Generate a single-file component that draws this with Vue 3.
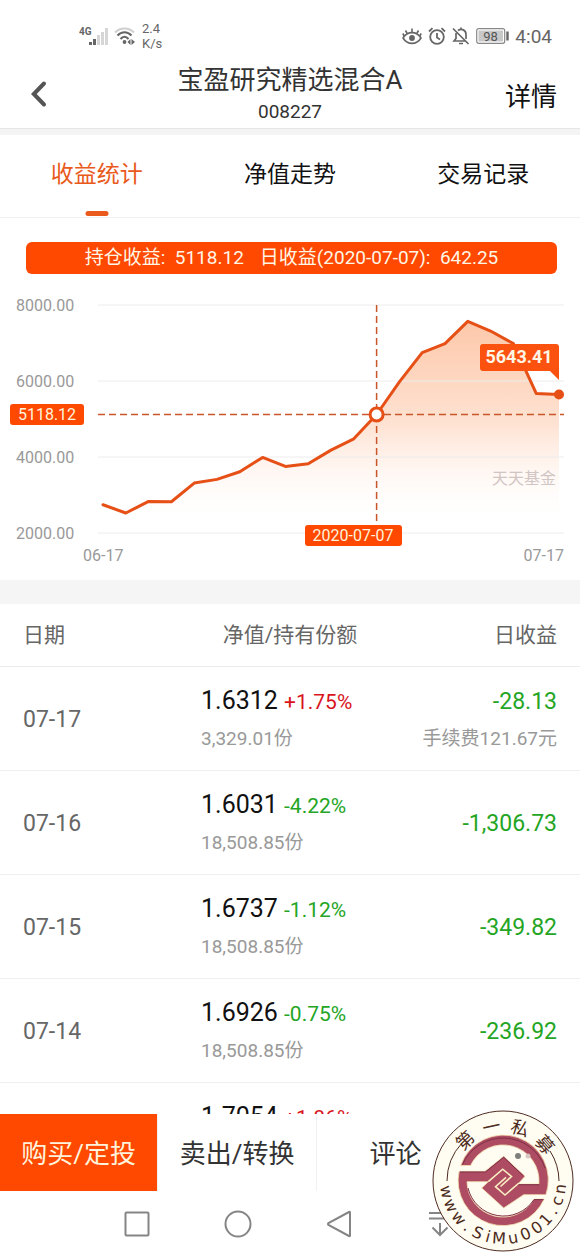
<template>
  <div class="fund-page">

    <!-- ================= 状态栏 ================= -->
    <div class="status-bar">
      <div class="status-left">
        <svg class="signal" viewBox="0 0 29 20" width="29" height="20">
          <text x="0" y="9" class="net-type">4G</text>
          <g stroke-width="3">
            <path d="M11.5 19v-3M15.5 19v-6" stroke="#666" />
            <path d="M19.5 19v-10M23.5 19v-13M27.5 19v-17" stroke="#d6d6d6" />
          </g>
        </svg>
        <svg viewBox="0 0 22 20" width="22" height="20" fill="none" stroke-width="2">
          <path d="M1 6.500C6 1 15 1 20 6.500" stroke="#d0d0d0" />
          <path d="M3.500 9.500C7.500 5 13.500 5 17.500 9.500M6.500 13C9 10 12 10 14.500 13" stroke="#666" />
          <circle cx="10.500" cy="16" r="1.900" fill="#666" />
          <path d="M16.500 13v6l-3-3zM17.500 13v6l3.500-3z" fill="#666" />
        </svg>
        <div class="speed">2.4<br />K/s</div>
      </div>
      <div class="status-right">
        <svg viewBox="0 0 20 18" width="20" height="18" fill="none" stroke="#666" stroke-width="1.600">
          <path d="M1 11C5.500 3.800 14.500 3.800 19 11 14.500 18.200 5.500 18.200 1 11z" />
          <circle cx="10" cy="11" r="2.900" fill="#666" stroke="none" />
          <path d="M10 5.500V1.500M5.200 6.500 3.500 3.500M14.800 6.500 16.500 3.500M2.200 9 0.800 6.500M17.800 9 19.200 6.500" />
        </svg>
        <svg viewBox="0 0 18 18" width="18" height="18" fill="none" stroke="#666" stroke-width="1.800">
          <circle cx="9" cy="10" r="6.800" />
          <path d="M9 6v4.500l3 2M1 4.500 4.500 1.200M17 4.500 13.500 1.200" />
        </svg>
        <svg viewBox="0 0 18 18" width="18" height="18" fill="none" stroke="#666" stroke-width="1.700">
          <path d="M4 6v5.500L2 14h11M6 3.500C9.500 1 14 3 14 7.500V12M9 0.500V2M7 16.500h4M1 1.500 16.500 17" />
        </svg>
        <svg class="battery" viewBox="0 0 33 16" width="33" height="16">
          <rect x="0.700" y="0.700" width="28" height="14.600" rx="2" fill="#fff" stroke="#888" stroke-width="1.200" />
          <rect x="2.500" y="2.500" width="24.500" height="11" fill="#c8c8c8" />
          <path d="M31.500 3.500v9" stroke="#666" stroke-width="2.400" />
          <text x="14.500" y="13" text-anchor="middle">98</text>
        </svg>
        <span class="clock">4:04</span>
      </div>
    </div>

    <!-- ================= 标题栏 ================= -->
    <header class="page-header">
      <button class="back-btn" aria-label="返回">
        <svg viewBox="0 0 16 28" width="16" height="28">
          <path d="M13 3.500 2.800 14 13 24.500" fill="none" stroke="#555" stroke-width="4" stroke-linecap="round" />
        </svg>
      </button>
      <div class="header-title">
        <h1>宝盈研究精选混合A</h1>
        <p>008227</p>
      </div>
      <button class="detail-btn">详情</button>
    </header>

    <!-- ================= Tab ================= -->
    <nav class="tabs">
      <button
        v-for="tab in tabs"
        :key="tab.id"
        :class="{ active: currentTab === tab.id }"
        @click="currentTab = tab.id"
      >
        {{ tab.name }}
      </button>
    </nav>

    <!-- ================= 收益走势图 ================= -->
    <section class="chart-section">
      <div class="chart-banner">
        <span>持仓收益:&nbsp; 5118.12</span>
        <span>日收益(2020-07-07):&nbsp; 642.25</span>
      </div>

      <svg class="chart" viewBox="0 0 580 290">
        <defs>
          <linearGradient id="areaFill" x1="0" y1="31" x2="0" y2="236" gradientUnits="userSpaceOnUse">
            <stop offset="0" stop-color="#fdc8aa" />
            <stop offset="0.500" stop-color="#fee2d2" />
            <stop offset="1" stop-color="#fff" stop-opacity="0" />
          </linearGradient>
        </defs>

        <polygon :points="areaPoints" fill="url(#areaFill)" />
        <g v-for="tick in ticks" :key="tick">
          <line x1="98" x2="564" :y1="toY(tick)" :y2="toY(tick)" class="grid-line" />
          <text x="16" :y="toY(tick) + 6" class="axis-text">{{ tick.toFixed(2) }}</text>
        </g>
        <text x="83" y="271" class="axis-text">06-17</text>
        <text x="564" y="271" text-anchor="end" class="axis-text">07-17</text>
        <text x="556" y="194" text-anchor="end" class="brand-text">天天基金</text>

        <!-- 十字线 -->
        <line x1="98" x2="564" :y1="toY(5118.12)" :y2="toY(5118.12)" class="cross-line" />
        <line :x1="toX(12)" :x2="toX(12)" y1="15" y2="236" class="cross-line" />

        <polyline :points="linePoints" class="profit-line" />
        <circle :cx="toX(12)" :cy="toY(5118.12)" r="6.500" fill="#fff" stroke="#e64f15" stroke-width="3" />
        <circle :cx="toX(20)" :cy="toY(5643.41)" r="5" fill="#e64f15" />

        <!-- 标签 -->
        <rect x="10" y="114" width="74" height="21" rx="3" class="tag" />
        <text x="47" y="130" text-anchor="middle" class="tag-text">5118.12</text>
        <rect x="305" y="235" width="97" height="21" rx="3" class="tag" />
        <text x="353" y="251" text-anchor="middle" class="tag-text">2020-07-07</text>
        <path d="M483 54h73q3 0 3 3v33l-9-9h-67q-3 0-3-3v-21q0-3 3-3z" fill="#fb530f" />
        <text x="519" y="73" text-anchor="middle" class="last-value">5643.41</text>
      </svg>
    </section>

    <!-- ================= 每日收益 ================= -->
    <section class="list-section">
      <table class="profit-table">
        <thead>
          <tr>
            <th class="col-date">日期</th>
            <th class="col-value">净值/持有份额</th>
            <th class="col-profit">日收益</th>
          </tr>
        </thead>
        <tbody>
          <tr v-for="row in rows" :key="row.date">
            <td class="col-date">{{ row.date }}</td>
            <td class="col-value">
              <div class="net-value">
                {{ row.value }}
                <span :class="row.rate.startsWith('+') ? 'up' : 'down'">{{ row.rate }}</span>
              </div>
              <div class="sub">{{ row.share }}份</div>
            </td>
            <td class="col-profit">
              <div class="profit down">{{ row.profit }}</div>
              <div v-if="row.fee" class="sub">手续费{{ row.fee }}元</div>
            </td>
          </tr>
        </tbody>
      </table>
    </section>

    <!-- ================= 底部操作 ================= -->
    <footer class="action-bar">
      <button class="buy">购买/定投</button>
      <button>卖出/转换</button>
      <button>评论</button>
      <button class="more" aria-label="更多">
        <svg viewBox="0 0 26 8" width="26" height="8">
          <circle cx="3" cy="4" r="3" fill="#7d807a" />
          <circle cx="13" cy="4" r="2.500" fill="#d9c8c2" />
        </svg>
      </button>
    </footer>

    <!-- ================= 系统导航 ================= -->
    <div class="system-nav">
      <button aria-label="最近任务">
        <svg viewBox="0 0 28 28"><rect x="2.500" y="2.500" width="23" height="23" rx="1" /></svg>
      </button>
      <button aria-label="主页">
        <svg viewBox="0 0 28 28"><circle cx="14" cy="14" r="12.500" /></svg>
      </button>
      <button aria-label="后退">
        <svg viewBox="0 0 28 28"><path d="M25 2.500v23q0 1-1 .500L3.500 15q-1-1 0-2L24 2q1-.500 1 .500z" /></svg>
      </button>
      <button aria-label="收起导航">
        <svg viewBox="0 0 28 28"><path d="M3 3h22M3 8.500h22M14 13v12M6.500 17.500l7.500 7.500 7.500-7.500" /></svg>
      </button>
    </div>

    <!-- ================= 水印 ================= -->
    <svg class="watermark" viewBox="0 0 142 142" width="142" height="142">
      <circle cx="71" cy="71" r="70" fill="#fffdf0" fill-opacity="0.960" stroke="#4d2a20" />
      <path d="M15 71A56 56 0 0 1 30 33M127 71A56 56 0 0 0 118 41" fill="none" stroke="#4d2a20" />
      <text
        v-for="item in topChars"
        :key="item.text"
        x="71"
        y="22"
        class="mark-cn"
        :transform="`rotate(${item.angle} 71 71)`"
      >{{ item.text }}</text>
      <text
        v-for="item in siteChars"
        :key="item.angle"
        x="71"
        y="134"
        class="mark-url"
        :transform="`rotate(${item.angle} 71 71)`"
      >{{ item.text }}</text>
      <!-- 外环与回形标志 -->
      <path
        d="M28.700 55.500A45 45 0 0 1 113.900 84.700H91.700L71.700 98 49.700 78 56.300 71.700H35A36 36 0 0 0 102.200 89H112.200A45 45 0 0 1 27.100 61.300H53L71.700 46.300 93 66.300 86 74H106.900A36 36 0 0 0 38.500 55.500z"
        fill="#ad4c62"
        stroke="#f3dfae"
        stroke-width="0.800"
      />
      <path
        d="M30.500 54.500A44.300 44.300 0 0 1 113 58M28 62H53.500L71.700 47.200 91.500 66M36 78A36.500 36.500 0 0 0 102 89.600H111.500M86 74.700H107"
        fill="none"
        stroke="#7d2f45"
      />
      <path d="M56.300 71.700 70.700 59.200 79.500 66.500 68.500 76.500M87 73 73 85 63.500 76.700 74 67.300" fill="none" stroke="#fbedc2" stroke-width="1.600" />
    </svg>
  </div>
</template>

<script setup>
import { ref } from "vue";

/* tab */
const tabs = [
  { id: 1, name: "收益统计" },
  { id: 2, name: "净值走势" },
  { id: 3, name: "交易记录" }
];

const currentTab = ref(1);

/* 图表数据 */
const ticks = [8000, 6000, 4000, 2000];

const profits = [
  2744, 2526, 2830, 2822, 3314, 3411, 3611, 3989, 3753, 3821, 4181,
  4478, 5118.12, 5975, 6748, 6984, 7570, 7315, 6984, 5671.54, 5643.41
];

function toX(index) {
  return 103 + index * 22.8;
}

function toY(value) {
  return 243 - (value - 2000) * 0.038;
}

const linePoints = profits.map((item, index) => `${toX(index)},${toY(item)}`).join(" ");
const areaPoints = `${toX(0)},243 ${linePoints} ${toX(20)},243`;

/* 列表数据 */
const rows = ref([
  { date: "07-17", value: "1.6312", rate: "+1.75%", share: "3,329.01", profit: "-28.13", fee: "121.67" },
  { date: "07-16", value: "1.6031", rate: "-4.22%", share: "18,508.85", profit: "-1,306.73" },
  { date: "07-15", value: "1.6737", rate: "-1.12%", share: "18,508.85", profit: "-349.82" },
  { date: "07-14", value: "1.6926", rate: "-0.75%", share: "18,508.85", profit: "-236.92" },
  { date: "07-13", value: "1.7054", rate: "+1.86%", share: "18,508.85", profit: "" }
]);

/* 水印文字，沿圆周排列 */
const topChars = [
  { text: "第", angle: -43 },
  { text: "一", angle: -12 },
  { text: "私", angle: 18 },
  { text: "募", angle: 49 }
];

const siteAngles = [79, 65, 50, 38, 26, 15, 4, -10, -23, -36, -48, -59, -70, -82];
const siteChars = "www.SiMu001.cn".split("").map((text, index) => ({
  text,
  angle: siteAngles[index]
}));
</script>

<style>
body {
  margin: 0;
  background: #fff;
}
</style>

<style scoped>
.fund-page {
  position: relative;
  display: flex;
  flex-direction: column;
  height: 100vh;
  overflow: hidden;
  background: #fff;
  color: #333;
  font-family: Roboto, "Noto Sans CJK SC", sans-serif;
}

button {
  padding: 0;
  border: none;
  background: none;
  color: inherit;
  font-family: inherit;
  cursor: pointer;
}

/* status */
.status-bar {
  display: flex;
  flex: none;
  justify-content: space-between;
  box-sizing: border-box;
  height: 60px;
  padding: 12px 28px 0 79px;
  color: #666;
}

.status-left,
.status-right {
  display: flex;
  align-items: center;
  gap: 6px;
  height: 48px;
}

.net-type {
  font-size: 10px;
  font-weight: 700;
  fill: #666;
}

.speed {
  font-size: 13px;
  line-height: 15px;
}

.battery text {
  font-size: 13px;
  fill: #555;
}

.clock {
  font-size: 19px;
}

/* header */
.page-header {
  display: grid;
  flex: none;
  grid-template-columns: 1fr auto 1fr;
  align-items: center;
  padding: 2px 23px;
  border-bottom: 1px solid #e6e6e6;
}

.back-btn {
  justify-self: start;
  display: flex;
  padding: 0 8px;
}

.header-title {
  text-align: center;
}

.header-title h1 {
  margin: 0;
  font-size: 26px;
  font-weight: 400;
  line-height: 36px;
}

.header-title p {
  margin: 0;
  font-size: 19px;
  line-height: 28px;
}

.detail-btn {
  justify-self: end;
  color: #111;
  font-size: 26px;
}

/* tabs */
.tabs {
  display: flex;
  flex: none;
  height: 82px;
  border-top: 6px solid #f4f4f4;
  border-bottom: 1px solid #f0f0f0;
}

.tabs button {
  position: relative;
  flex: 1;
  padding-bottom: 8px;
  color: #111;
  font-size: 23px;
}

.tabs button.active {
  color: #e95a1c;
}

.tabs button.active::after {
  content: "";
  position: absolute;
  bottom: 1px;
  left: 50%;
  width: 23px;
  height: 5px;
  border-radius: 3px;
  background: #e95a1c;
  transform: translateX(-50%);
}

/* chart */
.chart-section {
  flex: none;
  padding-top: 24px;
  border-bottom: 24px solid #f5f5f5;
}

.chart-banner {
  display: flex;
  justify-content: center;
  gap: 16px;
  margin: 0 23px 16px 26px;
  border-radius: 6px;
  background: #ff4800;
  color: #fff6e6;
  font-size: 19px;
  line-height: 32px;
}

.chart {
  display: block;
  width: 100%;
}

.grid-line {
  stroke: #ececec;
}

.axis-text {
  font-size: 16px;
  fill: #999;
}

.brand-text {
  font-size: 16px;
  fill: #d2c6c4;
}

.cross-line {
  stroke: #c9552b;
  stroke-width: 1.5;
  stroke-dasharray: 7 4;
}

.profit-line {
  fill: none;
  stroke: #e64f15;
  stroke-width: 3;
  stroke-linecap: round;
  stroke-linejoin: round;
}

.tag {
  fill: #ff4800;
}

.tag-text {
  font-size: 16px;
  fill: #fff3dc;
}

.last-value {
  font-size: 18px;
  font-weight: 700;
  fill: #fff6e6;
}

/* list */
.list-section {
  flex: 1;
  min-height: 0;
  overflow: hidden;
}

.profit-table {
  width: 100%;
  border-collapse: collapse;
  table-layout: fixed;
}

.profit-table th {
  height: 58px;
  padding: 0 0 4px;
  border-bottom: 1px solid #ececec;
  color: #666;
  font-size: 21px;
  font-weight: 400;
}

.profit-table td {
  height: 101px;
  padding: 2px 0 0;
  border-bottom: 1px solid #efefef;
}

.profit-table .col-date {
  width: 30%;
  padding-left: 23px;
  color: #666;
  text-align: left;
}

.profit-table td.col-date {
  font-size: 23px;
}

.profit-table td.col-value {
  padding-left: 4px;
  text-align: left;
}

.profit-table .col-profit {
  width: 30%;
  padding-right: 23px;
  text-align: right;
}

.net-value {
  color: #111;
  font-size: 25px;
  line-height: 38px;
}

.net-value span {
  font-size: 21px;
}

.profit {
  font-size: 23px;
  line-height: 38px;
}

.sub {
  color: #999;
  font-size: 19px;
  line-height: 36px;
}

.up {
  color: #d8151c;
}

.down {
  color: #24a524;
}

/* action */
.action-bar {
  display: flex;
  flex: none;
  height: 77px;
  background: #fff;
}

.action-bar button {
  flex: 3;
  padding-bottom: 3px;
  border-left: 1px solid #f1f1f1;
  font-size: 26px;
}

.action-bar .buy {
  border-left: none;
  background: #ff4800;
  color: #fff3dc;
}

.action-bar .more {
  flex: 2;
}

.more svg {
  position: relative;
  z-index: 2;
}

/* system nav */
.system-nav {
  display: flex;
  flex: none;
  justify-content: space-between;
  box-sizing: border-box;
  height: 66px;
  padding: 0 126px 0 123px;
  background: #fff;
}

.system-nav svg {
  display: block;
  width: 28px;
  height: 28px;
  fill: none;
  stroke: #858585;
  stroke-width: 2;
}

/* watermark */
.watermark {
  position: absolute;
  right: 6px;
  bottom: 5px;
  z-index: 1;
  pointer-events: none;
}

.mark-cn {
  font-size: 18px;
  fill: #4d2a20;
  text-anchor: middle;
}

.mark-url {
  font-family: "DejaVu Sans", sans-serif;
  font-size: 16px;
  fill: #4d2a20;
  text-anchor: middle;
}
</style>
